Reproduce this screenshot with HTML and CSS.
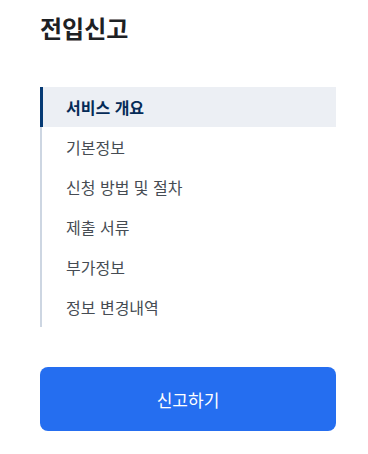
FILE: index.html
```html
<!DOCTYPE html>
<html lang="ko">

<head>
    <meta charset="UTF-8">
    <meta name="viewport" content="width=device-width, initial-scale=1.0">
    <title>전입신고</title>
    <link rel="stylesheet" href="styles.css">
</head>

<body>
    <div class="page">
        <h1 class="title">전입신고</h1>
        <ul class="side-nav">
            <li class="nav-item active">서비스 개요</li>
            <li class="nav-item">기본정보</li>
            <li class="nav-item">신청 방법 및 절차</li>
            <li class="nav-item">제출 서류</li>
            <li class="nav-item">부가정보</li>
            <li class="nav-item">정보 변경내역</li>
        </ul>
        <button type="button" class="btn-apply">신고하기</button>
    </div>
</body>

</html>
```

FILE: styles.css
```css
body {
    margin: 0;
    font-family: "Noto Sans CJK KR", "Noto Sans", sans-serif;
    background-color: #fff;
}

.page {
    width: 296px;
    padding: 12px 40px 0;
}

.title {
    margin: 0;
    font-size: 24px;
    font-weight: 700;
    line-height: 32px;
    color: #1e2124;
}

.side-nav {
    list-style: none;
    margin: 43px 0 0;
    padding: 0;
    border-left: 2px solid #cdd6e2;
}

.nav-item {
    height: 40px;
    line-height: 40px;
    padding-left: 24px;
    font-size: 16px;
    color: #464c53;
}

.nav-item.active {
    margin-left: -2px;
    padding-left: 23px;
    border-left: 3px solid #063a74;
    background-color: #eceff4;
    color: #052b57;
    font-weight: 700;
}

.btn-apply {
    display: block;
    width: 296px;
    height: 64px;
    margin-top: 40px;
    border: none;
    border-radius: 8px;
    background-color: #256ef0;
    color: #fff;
    font-family: inherit;
    font-size: 17px;
}
```
